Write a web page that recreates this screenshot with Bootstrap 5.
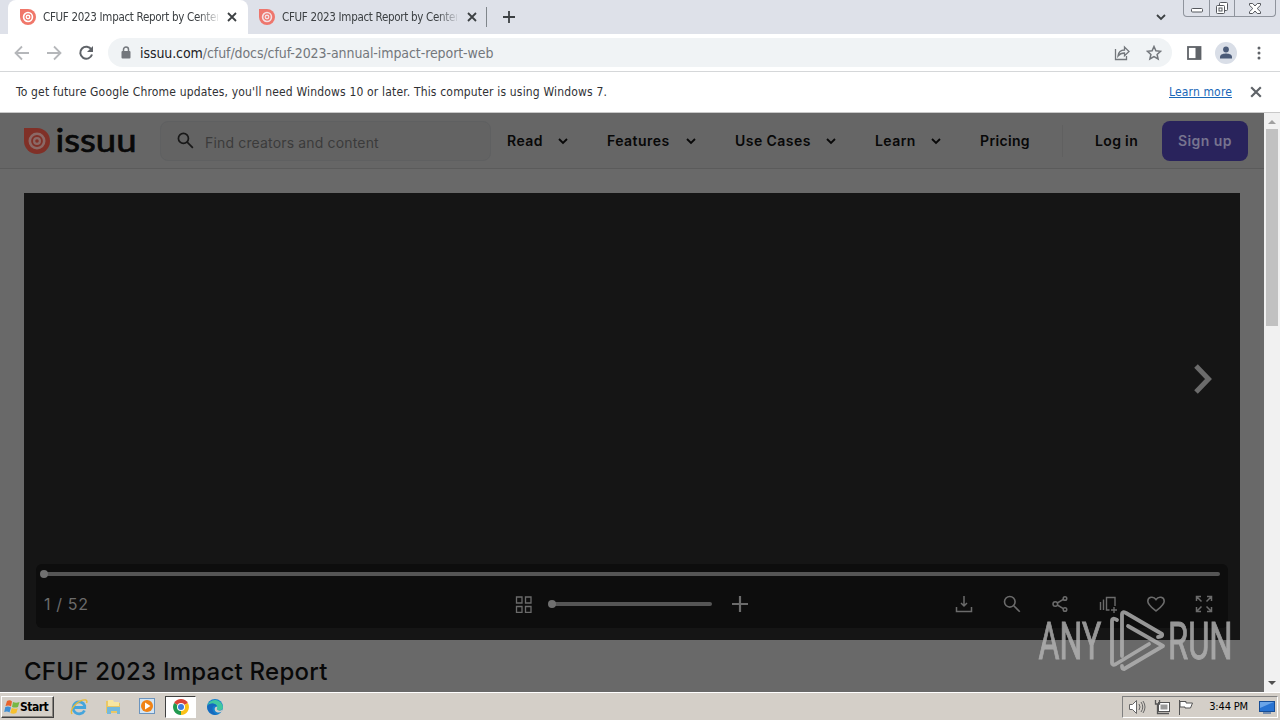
<!DOCTYPE html>
<html lang="en">
<head>
  <meta charset="UTF-8" />
  <meta name="viewport" content="width=device-width, initial-scale=1.0" />
  <title>CFUF 2023 Impact Report by Center</title>
  <link href="https://cdn.jsdelivr.net/npm/bootstrap@5.3.0/dist/css/bootstrap.min.css" rel="stylesheet">
  <style>
    body {
      width: 1280px;
      height: 720px;
      overflow: hidden;
      background: #fff;
      font-family: "DejaVu Sans Condensed", "DejaVu Sans", sans-serif;
      line-height: 1;
    }
    svg {
      display: block;
      flex: none;
      fill: none;
      stroke: currentColor;
    }
    svg.flat { stroke: none; }
    /* browser window */
    .tabstrip {
      height: 34px;
      background: #dee1e9;
      padding-left: 8px;
    }
    .tab {
      width: 239px;
      height: 34px;
      padding: 0 10px 0 12px;
      font-size: 11.5px;
      color: #3c4043;
    }
    .tab.current {
      width: 240px;
      padding-right: 11px;
      background: #fff;
      border-radius: 8px 8px 0 0;
    }
    .tab + .tab { padding-left: 11px; }
    .tab-title {
      width: 175px;
      margin-left: 7px;
      overflow: hidden;
      white-space: nowrap;
      line-height: 18px;
      letter-spacing: -.3px;
      -webkit-mask-image: linear-gradient(90deg, #000 155px, transparent 178px);
    }
    .tab-line {
      width: 1px;
      height: 20px;
      background: #80868b;
      margin-left: -1px;
    }
    .window-buttons {
      width: 93px;
      height: 17px;
      margin: 0 4px 0 17px;
      border: 1px solid #8f949d;
      border-top: 0;
      border-radius: 0 0 4px 4px;
      color: #55585e;
    }
    .window-buttons > span + span { border-left: 1px solid #8f949d; }
    .toolbar {
      height: 38px;
      border-bottom: 1px solid #d5d7d9;
      padding-left: 14px;
      color: #5f6368;
    }
    .address {
      width: 1064px;
      height: 29px;
      margin-left: 14px;
      padding: 0 10px 0 12px;
      background: #f0f3f5;
      border-radius: 15px;
      font-size: 14px;
      color: #73777c;
    }
    .url-text {
      margin-left: 8px;
      letter-spacing: -.08px;
      white-space: nowrap;
    }
    .url-text b {
      font-weight: 400;
      color: #202124;
    }
    .avatar {
      width: 22px;
      height: 22px;
      background: #d9dee7;
      color: #4b5b78;
    }
    .infobar {
      height: 41px;
      padding: 0 18px 0 16px;
      border-bottom: 1px solid #c9c9c9;
      font-size: 12px;
      color: #303134;
      white-space: nowrap;
    }
    .info-text { letter-spacing: .17px; }
    .infobar a {
      color: #1967b8;
      letter-spacing: .15px;
    }

    /* issuu page under the dark overlay */
    .viewport-area { height: 579px; }
    .site {
      width: 1264px;
      background: #696969;
      font-family: Inter, "Liberation Sans", sans-serif;
      color: #080808;
    }
    .site-header {
      height: 56px;
      padding: 0 16px 0 24px;
      background: #666;
      border-bottom: 1px solid #5b5b5b;
      font-size: 14px;
      font-weight: 600;
      letter-spacing: .45px;
      white-space: nowrap;
    }
    .search-box {
      width: 331px;
      height: 40px;
      margin-left: 24px;
      padding-left: 16px;
      background: #636363;
      border: 1px solid #5f6061;
      border-radius: 8px;
      font-size: 14px;
      font-weight: 400;
      letter-spacing: .16px;
      color: #3b3b3b;
    }
    .site-nav { margin-left: 16px; }
    .w-read { width: 100px; }
    .w-features { width: 128px; }
    .w-cases { width: 140px; }
    .w-learn { width: 105px; }
    .w-pricing { width: 82px; letter-spacing: .35px; }
    .nav-entry svg { margin: 1px 39px 0 auto; }
    .nav-divider {
      width: 1px;
      height: 32px;
      background: #606060;
      margin-right: 32px;
    }
    .w-login { letter-spacing: .35px; }
    .signup {
      width: 86px;
      height: 40px;
      margin-left: auto;
      border-radius: 8px;
      background: #29235c;
      color: #77748f;
    }
    .reader {
      width: 1216px;
      height: 447px;
      margin: 24px 0 0 24px;
      background: #151515;
      color: #6b6b6b;
    }
    .next-page {
      height: 371px;
      padding-right: 27px;
    }
    .controls {
      height: 64px;
      margin: 0 12px;
      padding: 6px 8px 0;
      border-radius: 6px;
      background: #0d0d0d;
      font-size: 16px;
    }
    .track {
      height: 4px;
      border-radius: 2px;
      background: #555;
    }
    .track::before {
      content: "";
      display: block;
      width: 8px;
      height: 8px;
      border-radius: 50%;
      background: #707070;
      transform: translate(-4px, -2px);
    }
    .page-track { margin-top: 2px; }
    .zoom-track {
      width: 160px;
      margin: 0 20px;
    }
    .control-row { height: 56px; }
    .control-icons {
      gap: 30px;
      margin-right: 7px;
    }
    .page-count {
      width: 471px;
      letter-spacing: .65px;
    }
    .doc-title {
      margin: 20px 0 0 24px;
      font-size: 24px;
      font-weight: 500;
      line-height: 24px;
      letter-spacing: .24px;
    }
    .scrollbar {
      width: 16px;
      background: #f1f1f1;
    }
    .thumb {
      width: 12px;
      height: 197px;
      background: #c1c1c1;
    }

    /* desktop taskbar */
    .taskbar {
      height: 28px;
      padding: 0 2px 0 1px;
      background: #d4cfc8;
      border-top: 1px solid #fff;
      box-shadow: 0 -1px #d4cfc8;
    }
    .start-button {
      width: 53px;
      height: 22px;
      padding-left: 2px;
      border: 1px solid;
      border-color: #fff #404040 #404040 #fff;
      box-shadow: inset -1px -1px #8a8680;
      font: bold 12px "DejaVu Sans Condensed", sans-serif;
      letter-spacing: -.5px;
      color: #000;
    }
    .launcher { width: 34px; height: 22px; }
    .launcher.running {
      width: 31px;
      margin: 0 2px 0 1px;
      background: #fff;
      border: 1px solid;
      border-color: #404040 #fff #fff #404040;
    }
    .tray {
      width: 156px;
      height: 22px;
      padding: 0 2px 0 5px;
      border: 1px solid;
      border-color: #808080 #fff #fff #808080;
      font-size: 11px;
      color: #000;
      letter-spacing: -.15px;
    }
    .watermark {
      left: 1036px;
      top: 606px;
      color: #b4b4b4;
      opacity: .82;
    }
  </style>
</head>
<body>
  <svg width="0" height="0" class="position-absolute">
    <symbol id="issuu-mark" viewBox="0 0 26 26">
      <path d="M0 0h13a13 13 0 1 1-13 13z" fill="currentColor" stroke="none"/>
      <circle cx="13" cy="13" r="7.2" fill="none" stroke="var(--ring)" stroke-width="2.6"/>
      <circle cx="13" cy="13" r="2.9" fill="none" stroke="var(--ring)" stroke-width="2.2"/>
    </symbol>
    <symbol id="cross" viewBox="0 0 10 10">
      <path d="M1 1l8 8M9 1l-8 8" stroke-width="1.8"/>
    </symbol>
    <symbol id="chevron" viewBox="0 0 10 8">
      <path d="M1 2l4 4 4-4" stroke-width="1.8"/>
    </symbol>
    <symbol id="lens" viewBox="0 0 18 18">
      <circle cx="6.8" cy="6.8" r="5.3"/><path d="M10.8 10.8l6 6"/>
    </symbol>
  </svg>

  <div class="tabstrip d-flex align-items-center">
    <div class="tab current d-flex align-items-center">
      <svg width="16" height="16" style="color:#f0776a;--ring:#fff"><use href="#issuu-mark"/></svg>
      <span class="tab-title">CFUF 2023 Impact Report by Center</span>
      <svg class="ms-auto" width="10" height="10"><use href="#cross"/></svg>
    </div>
    <div class="tab d-flex align-items-center">
      <svg width="16" height="16" style="color:#ee766d;--ring:#f4dfe3"><use href="#issuu-mark"/></svg>
      <span class="tab-title">CFUF 2023 Impact Report by Center</span>
      <svg class="ms-auto" width="10" height="10"><use href="#cross"/></svg>
    </div>
    <div class="tab-line"></div>
    <svg class="ms-3" width="12" height="12" stroke-width="1.8" color="#3c4043"><path d="M6 0v12M0 6h12"/></svg>
    <svg class="ms-auto" width="10" height="8" color="#3c4043"><use href="#chevron"/></svg>
    <div class="window-buttons d-flex align-self-start">
      <span class="d-flex align-items-center justify-content-center" style="width:25px"><svg class="mt-1" width="12" height="5"><rect x=".5" y=".5" width="11" height="3.5" rx="1" fill="#fff"/></svg></span>
      <span class="d-flex align-items-center justify-content-center" style="width:25px"><svg width="14" height="13"><rect x="4.5" y=".5" width="8" height="8" rx="1" fill="#fff"/><rect x="1.5" y="3.5" width="8" height="8" rx="1" fill="#fff"/><rect x="4" y="6" width="3" height="3"/></svg></span>
      <span class="d-flex align-items-center justify-content-center flex-fill"><svg width="12" height="11"><path d="M.5.5h3.2L6 3l2.3-2.5h3.2v1.8L8.2 5.5l3.3 3.2v1.8H8.3L6 8l-2.3 2.5H.5V8.7l3.3-3.2L.5 2.3z" fill="#fff"/></svg></span>
    </div>
  </div>

  <div class="toolbar d-flex align-items-center">
    <svg width="16" height="16" stroke-width="1.8" color="#b5b7ba"><path d="M15 8H2M8 1.5L1.5 8 8 14.5"/></svg>
    <svg class="ms-3" width="16" height="16" stroke-width="1.8" color="#b5b7ba"><path d="M1 8h13M8 1.5L14.5 8 8 14.5"/></svg>
    <svg class="ms-3" width="16" height="16" stroke-width="2"><path d="M13.4 4.6A6 6 0 1 0 14 9.5"/><path d="M15 1v6H9z" fill="currentColor" stroke="none"/></svg>
    <div class="address d-flex align-items-center">
      <svg width="12" height="14"><rect x="1.5" y="5" width="9" height="7.5" rx="1" fill="currentColor" stroke="none"/><path d="M3.5 6V3.6a2.5 2.5 0 0 1 5 0V6" stroke-width="1.5"/></svg>
      <span class="url-text"><b>issuu.com</b>/cfuf/docs/cfuf-2023-annual-impact-report-web</span>
      <svg class="ms-auto" width="16" height="16" stroke-width="1.3"><path d="M1.5 4v10.5h11V11M4 11c.5-4 3-6 6.500-6V2l4.500 4.500-4.500 4.200V8C7.500 8 5.500 9 4 11z"/></svg>
      <svg class="ms-3" width="16" height="16" stroke-width="1.5"><path d="M8 1.500l1.900 4.300 4.700.5-3.500 3.100 1 4.600L8 11.600 3.900 14l1-4.600-3.500-3.100 4.700-.5z"/></svg>
    </div>
    <svg width="16" height="14" style="margin-left:14px"><rect x="2" y="1" width="12.5" height="12" stroke-width="1.8"/><path d="M12 1v12" stroke-width="5"/></svg>
    <span class="avatar rounded-circle d-flex align-items-center justify-content-center" style="margin-left:13px"><svg class="flat" width="14" height="13"><circle cx="7" cy="3.5" r="2.9" fill="currentColor"/><path d="M1 12.500V10.800C1 8.200 5 7.500 7 7.500s6 .7 6 3.300v1.700z" fill="currentColor"/></svg></span>
    <svg class="flat" width="4" height="14" style="margin-left:20px"><g fill="#5f6368"><circle cx="2" cy="2" r="1.5"/><circle cx="2" cy="7" r="1.5"/><circle cx="2" cy="12" r="1.5"/></g></svg>
  </div>

  <div class="infobar d-flex align-items-center">
    <span class="info-text">To get future Google Chrome updates, you'll need Windows 10 or later. This computer is using Windows 7.</span>
    <a href="#" class="ms-auto">Learn more</a>
    <svg width="12" height="12" style="margin-left:18px" color="#5f6368"><use href="#cross"/></svg>
  </div>

  <div class="viewport-area d-flex">
    <main class="site">
      <header class="site-header d-flex align-items-center">
        <svg width="112" height="36" viewBox="0 0 112 36" overflow="visible">
          <g color="#803027" style="--ring:#8b6966"><use href="#issuu-mark" width="26" height="26" y="5"/></g>
          <text x="31.5" y="28.5" textLength="81" lengthAdjust="spacingAndGlyphs" font-family="Lato, sans-serif" font-weight="400" font-size="33" letter-spacing="0" fill="#080808" stroke="#080808" stroke-width=".7">issuu</text>
        </svg>
        <div class="search-box d-flex align-items-center">
          <svg width="17" height="17" stroke-width="1.8" color="#181818"><use href="#lens"/></svg>
          <span class="mt-1" style="margin-left:11px">Find creators and content</span>
        </div>
        <nav class="site-nav d-flex align-items-center">
          <div class="nav-entry w-read d-flex align-items-center">Read <svg width="10" height="8"><use href="#chevron"/></svg></div>
          <div class="nav-entry w-features d-flex align-items-center">Features <svg width="10" height="8"><use href="#chevron"/></svg></div>
          <div class="nav-entry w-cases d-flex align-items-center">Use Cases <svg width="10" height="8"><use href="#chevron"/></svg></div>
          <div class="nav-entry w-learn d-flex align-items-center">Learn <svg width="10" height="8"><use href="#chevron"/></svg></div>
          <div class="w-pricing">Pricing</div>
          <div class="nav-divider"></div>
          <div class="w-login">Log in</div>
        </nav>
        <div class="signup d-flex align-items-center justify-content-center">Sign up</div>
      </header>

      <section class="reader">
        <div class="next-page d-flex align-items-center justify-content-end">
          <svg width="20" height="30" stroke-width="5"><path d="M3 2l12.500 13L3 28"/></svg>
        </div>
        <div class="controls">
          <div class="track page-track"></div>
          <div class="control-row d-flex align-items-center">
            <span class="page-count">1 / 52</span>
            <svg width="17" height="17" stroke-width="1.3"><path d="M1.500 1H7v6H1.500zM10.500 1H16v6h-5.500zM1.500 10.500H7v6H1.500zM10.500 10.500H16v6h-5.500z"/></svg>
            <div class="track zoom-track"></div>
            <svg width="16" height="16" stroke-width="2.2"><path d="M8 0v16M0 8h16"/></svg>
            <div class="control-icons ms-auto d-flex align-items-center">
              <svg width="18" height="18" stroke-width="1.5"><path d="M9 1v9M6 8l3 3 3-3M1.500 12v4.500h15V12"/></svg>
              <svg width="18" height="18" stroke-width="1.6"><use href="#lens"/></svg>
              <svg width="18" height="18" stroke-width="1.5"><circle cx="4.300" cy="9" r="2.300"/><circle cx="14" cy="3.500" r="1.800"/><circle cx="14" cy="14.500" r="1.800"/><path d="M6.300 8L12.300 4.400M6.300 10l6 3.600"/></svg>
              <svg width="18" height="18" stroke-width="1.4"><path d="M1.500 7v8M4.500 4.500V15M10.500 15H7.500V2.500h8.500V11M15 12v6M12 15h6"/></svg>
              <svg width="18" height="18" stroke-width="1.6"><path d="M9 16C5 12.800.8 9.800.8 6.200.8 1.800 6.500.8 9 4.600c2.500-3.800 8.200-2.800 8.200 1.600C17.200 9.800 13 12.800 9 16z"/></svg>
              <svg width="18" height="18" stroke-width="1.5"><path d="M6.500 6.500L2 2M1.500 6V1.500H6M11.500 6.500L16 2M12 1.500h4.500V6M6.500 11.500L2 16M1.500 12v4.500H6M11.500 11.500L16 16M12 16.500h4.500V12"/></svg>
            </div>
          </div>
        </div>
      </section>
      <h1 class="doc-title">CFUF 2023 Impact Report</h1>
    </main>
    <div class="scrollbar d-flex flex-column align-items-center">
      <svg width="16" height="16"><path d="M4 11l4-4 4 4z" fill="#a0a0a0" stroke="none"/></svg>
      <div class="thumb"></div>
      <svg class="mt-auto" width="16" height="16"><path d="M4 5l4 4 4-4z" fill="#505050" stroke="none"/></svg>
    </div>
  </div>

  <footer class="taskbar d-flex align-items-center">
    <div class="start-button d-flex align-items-center">
      <svg class="flat" width="16" height="16"><path d="M3 2q3-1.500 5 .5L7 7.500Q5 6 1.500 7z" fill="#e8632a"/><path d="M9 3q3 1.500 6.500 0L14 8q-3 1.200-6 0z" fill="#77b843"/><path d="M1.300 8Q4.500 7 7 8.500L5.500 13.500Q3.500 12 .2 13z" fill="#3f8fd4"/><path d="M7.800 9q3 1.500 6 .3L12.300 14q-3 1.500-6 0z" fill="#f6c02e"/></svg>
      <span>Start</span>
    </div>
    <div class="launcher d-flex align-items-center justify-content-center" style="margin-left:8px">
      <svg width="18" height="18"><path d="M14.500 12.500a6 6 0 1 1 .2-4.800v1.800H4" stroke="#45a5dc" stroke-width="2.8"/><path d="M2 16C-1 11 9 1 16 2q1.500.8.5 3" stroke="#e8bb38" stroke-width="1.4"/></svg>
    </div>
    <div class="launcher d-flex align-items-center justify-content-center">
      <svg class="flat" width="17" height="18"><path d="M1 3h6l1 2h7v10H1z" fill="#e9c765"/><path d="M3 2h5l1 2h5v4H3z" fill="#f8e6a0"/><path d="M2 9h13v7h-3v-3H6v3H2z" fill="#74b9dc"/></svg>
    </div>
    <div class="launcher d-flex align-items-center justify-content-center">
      <svg class="flat" width="17" height="17"><rect x=".5" y=".5" width="15" height="15" fill="#d4e6f5" stroke="#6b94be"/><circle cx="8" cy="8" r="6" fill="#f08316"/><path d="M6 4.500v7L11.500 8z" fill="#fff"/></svg>
    </div>
    <div class="launcher running d-flex align-items-center justify-content-center">
      <svg class="flat" width="16" height="16"><path d="M8 8L1.100 4A8 8 0 0 1 14.900 4z" fill="#dc4437"/><path d="M8 8l6.900-4A8 8 0 0 1 8 16z" fill="#fbc116"/><path d="M8 8v8A8 8 0 0 1 1.100 4z" fill="#229a50"/><circle cx="8" cy="8" r="4" fill="#fff"/><circle cx="8" cy="8" r="3" fill="#3d7de0"/></svg>
    </div>
    <div class="launcher d-flex align-items-center justify-content-center">
      <svg class="flat" width="16" height="16"><circle cx="8" cy="8" r="8" fill="#1480ce"/><path d="M.3 7A8 8 0 0 1 16 8c0 3-3 4-5.500 3-1.800-1 .3-2-.5-4C8.800 4 3 3.500.3 7z" fill="#40c7a0"/><path d="M.3 7C3 3.500 9 4 10 7.500 7.500 5.500 5 7.500 5.500 10.500S8.500 15.500 11 15.300A8 8 0 0 1 .3 7z" fill="#1769bd"/><path d="M10 7.500c.8 1.500-1 2.500.5 3.500 2 1 4 .8 5-.5l-1 2.500c-4 1.500-8-.5-6.500-4.500z" fill="#d4cfc8"/></svg>
    </div>
    <div class="tray d-flex align-items-center ms-auto">
      <svg width="18" height="16" color="#666"><path d="M1.500 5.500h3l4-4v13l-4-4h-3z" fill="#fff"/><path d="M11 5q2 3 0 6M13 3q3.500 5 0 10M15 2q4 6 0 12"/></svg>
      <svg class="ms-2" width="16" height="16" color="#555"><rect x="4.500" y="3.500" width="11" height="9" fill="#fff"/><path d="M6.500 5.500h7v5h-7z" fill="#999" stroke="none"/><path d="M7 14.500h8M1.500 1v4h4V1M3.500 5v9.500H7" stroke-width="1.3"/></svg>
      <svg style="margin-left:7px" width="17" height="16" color="#555"><path d="M2.500 1v15M3 2.500h6v1.500h6.500l-2 5H8V8H3z" fill="#fff"/></svg>
      <span class="clock ms-auto text-nowrap">3:44 PM</span>
      <svg style="margin-left:11px" width="16" height="14"><rect x=".5" y="1.500" width="15" height="10" fill="#2873d2" stroke="#164d96"/><path d="M1 2h14L1 8z" fill="#6ba5e8" stroke="none"/><path d="M4 13h8" stroke="#164d96"/></svg>
    </div>
  </footer>

  <svg class="watermark position-absolute" width="200" height="68" viewBox="0 0 200 68">
    <g font-family="Roboto, sans-serif" font-size="51" fill="currentColor" stroke-width="1">
      <text x="0" y="0" transform="translate(2.500 53) scale(.64 1)" textLength="98" lengthAdjust="spacingAndGlyphs">ANY</text>
      <text x="0" y="0" transform="translate(132 53) scale(.64 1)" textLength="101" lengthAdjust="spacingAndGlyphs">RUN</text>
    </g>
    <g stroke-width="3.800" stroke-linejoin="round" stroke-linecap="round">
      <path d="M81 14q-5-3-5 1v42q0 3 4 1L113 38"/>
      <path d="M86 50V8q0-3 4-1l36 21q1 3-4 3"/>
      <path d="M92 20l35 20-39 23q-2 0-2-3"/>
    </g>
  </svg>

  <script src="https://cdn.jsdelivr.net/npm/bootstrap@5.3.0/dist/js/bootstrap.bundle.min.js"></script>
</body>
</html>
